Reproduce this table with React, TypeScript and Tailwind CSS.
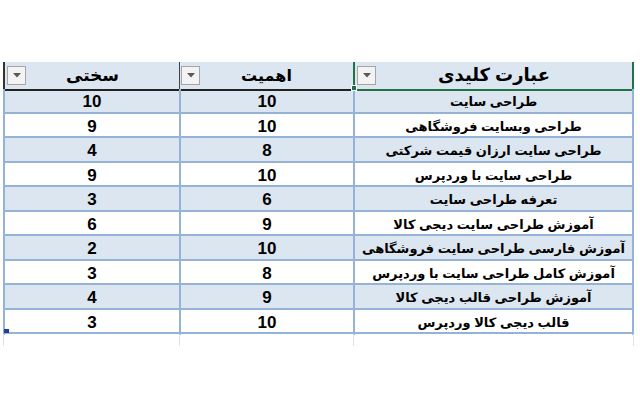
import React from 'react';

const rows: [string, string, string][] = [
  ['10', '10', 'طراحی سایت'],
  ['9', '10', 'طراحی وبسایت فروشگاهی'],
  ['4', '8', 'طراحی سایت ارزان قیمت شرکتی'],
  ['9', '10', 'طراحی سایت با وردپرس'],
  ['3', '6', 'تعرفه طراحی سایت'],
  ['6', '9', 'آموزش طراحی سایت دیجی کالا'],
  ['2', '10', 'آموزش فارسی طراحی سایت فروشگاهی'],
  ['3', '8', 'آموزش کامل طراحی سایت با وردپرس'],
  ['4', '9', 'آموزش طراحی قالب دیجی کالا'],
  ['3', '10', 'قالب دیجی کالا وردپرس'],
];

function FilterButton() {
  return (
    <div className="w-[19px] h-[19px] border border-[#a6a6a6] bg-[#f3f3f3] flex items-center justify-center shrink-0">
      <svg width="8" height="5" viewBox="0 0 8 5">
        <path d="M0 0 L8 0 L4 4.5 Z" fill="#595959" />
      </svg>
    </div>
  );
}

export default function App() {
  return (
    <div
      className="w-[640px] h-[400px] bg-white pt-[62px] pl-[3px]"
      style={{ fontFamily: '"Liberation Sans", "DejaVu Sans", Arial, sans-serif' }}
    >
      <div className="w-[631px] relative">
        {/* Header */}
        <div className="grid grid-cols-[176px_174px_281px] h-[27px] bg-[#dce6f1]">
          <div className="flex items-center border-l-2 border-[#333] border-b-2 border-b-[#222] pl-[2px]">
            <FilterButton />
            <div className="flex-1 text-center text-[17px] font-bold text-black pr-[20px] whitespace-nowrap" dir="rtl">سختی</div>
          </div>
          <div className="flex items-center border-l border-[#444] border-b-2 border-b-[#222] pl-[1px]">
            <FilterButton />
            <div className="flex-1 text-center text-[16px] font-bold text-black pr-[20px] whitespace-nowrap" dir="rtl">اهمیت</div>
          </div>
          <div className="flex items-center border-l-2 border-r-2 border-[#217346] border-b-2 border-b-[#217346] pl-[2px]">
            <FilterButton />
            <div className="flex-1 text-center text-[18px] font-bold text-black pr-[20px] whitespace-nowrap" dir="rtl">عبارت کلیدی</div>
          </div>
        </div>
        <div className="absolute left-[348px] top-[23px] w-[6px] h-[6px] bg-[#217346] border border-white" />

        {/* Rows */}
        {rows.map((r, i) => (
          <div
            key={i}
            className={`grid grid-cols-[176px_174px_281px] h-[24.5px] border-b-2 border-[#95b3d7] ${i % 2 === 0 ? 'bg-[#dce6f1]' : 'bg-white'}`}
          >
            <div className="flex items-center justify-center border-l-2 border-[#95b3d7] text-[17px] font-bold text-black">
              {r[0]}
            </div>
            <div className="flex items-center justify-center border-l-2 border-[#95b3d7] text-[17px] font-bold text-black">
              {r[1]}
            </div>
            <div className="flex items-center justify-center border-l-2 border-r-2 border-[#95b3d7] text-[13px] font-bold text-black whitespace-nowrap" dir="rtl">
              {r[2]}
            </div>
          </div>
        ))}
        <div className="absolute left-[1px] bottom-[13px] w-[5px] h-[4px] bg-[#2b3a8f]" />

        {/* faint gridlines below */}
        <div className="grid grid-cols-[176px_174px_281px] h-[12px]">
          <div className="border-l border-[#dde3ea]" />
          <div className="border-l border-[#dde3ea]" />
          <div className="border-l border-r border-[#dde3ea]" />
        </div>
      </div>
    </div>
  );
}
